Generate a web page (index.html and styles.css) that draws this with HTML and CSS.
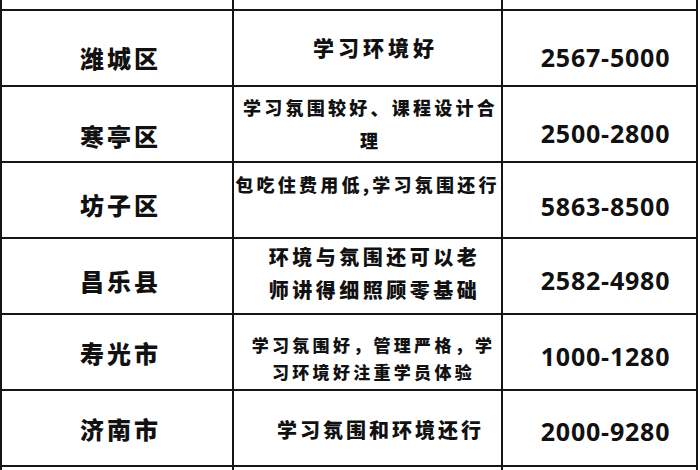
FILE: index.html
```html
<!DOCTYPE html>
<html lang="zh-CN">
<head>
<meta charset="utf-8">
<title>潍坊地区培训费用对比</title>
<link rel="stylesheet" href="styles.css">
</head>
<body>
<div class="sheet">
  <div class="row row0">
    <div class="cell"></div><div class="cell"></div><div class="cell"></div>
  </div>
  <div class="row row1">
    <div class="cell name">潍城区</div>
    <div class="cell desc">学习环境好</div>
    <div class="cell price">2567-5000</div>
  </div>
  <div class="row row2">
    <div class="cell name">寒亭区</div>
    <div class="cell desc">学习氛围较好、课程设计合<br>理</div>
    <div class="cell price">2500-2800</div>
  </div>
  <div class="row row3">
    <div class="cell name">坊子区</div>
    <div class="cell desc">包吃住费用低,学习氛围还行</div>
    <div class="cell price">5863-8500</div>
  </div>
  <div class="row row4">
    <div class="cell name">昌乐县</div>
    <div class="cell desc">环境与氛围还可以老<br>师讲得细照顾零基础</div>
    <div class="cell price">2582-4980</div>
  </div>
  <div class="row row5">
    <div class="cell name">寿光市</div>
    <div class="cell desc">学习氛围好，管理严格，学<br>习环境好注重学员体验</div>
    <div class="cell price">1000-1280</div>
  </div>
  <div class="row row6">
    <div class="cell name">济南市</div>
    <div class="cell desc">学习氛围和环境还行</div>
    <div class="cell price">2000-9280</div>
  </div>
  <div class="row row7">
    <div class="cell"></div><div class="cell"></div><div class="cell"></div>
  </div>
</div>
</body>
</html>
```

FILE: styles.css
```css
html, body {
  margin: 0;
  padding: 0;
  background: #ffffff;
}

body {
  width: 700px;
  height: 470px;
  overflow: hidden;
  color: #111111;
  font-family: "Noto Sans CJK SC", "Noto Sans", sans-serif;
}

.sheet {
  display: grid;
  grid-template-columns: 230px 267px 193px;
  grid-template-rows: 9px repeat(6, 74px) 10px;
  gap: 2px;
  padding: 0 2px;
  width: max-content;
  background: #151515;
}

.row {
  display: contents;
}

.cell {
  background: #ffffff;
  display: flex;
  align-items: center;
  justify-content: center;
  text-align: center;
  box-sizing: border-box;
  white-space: nowrap;
}

.name {
  font-size: 24px;
  font-weight: 900;
  letter-spacing: 3px;
  padding-left: 7px;
  line-height: 1.3;
}

.desc {
  font-weight: 900;
  line-height: 1.3;
}

.price {
  font-family: "Open Sans", "Noto Sans", sans-serif;
  font-size: 25px;
  font-weight: 700;
  letter-spacing: 0.8px;
  padding-left: 12px;
  line-height: 1.3;
}

/* row 1 */
.row1 .name { padding-top: 19px; }
.row1 .price { padding-top: 18px; }
.row1 .desc { font-size: 21px; letter-spacing: 4px; padding-left: 16px; }

/* row 2 */
.row2 .name { padding-top: 24px; }
.row2 .price { padding-top: 18px; }
.row2 .desc { font-size: 18px; letter-spacing: 3.25px; padding-left: 6px; line-height: 33px; }

/* row 3 */
.row3 .name { padding-top: 10px; }
.row3 .price { padding-top: 12px; }
.row3 .desc { font-size: 18px; letter-spacing: 3.25px; padding-bottom: 30px; }

/* row 4 */
.row4 .name { padding-top: 10px; }
.row4 .price { padding-top: 8px; }
.row4 .desc { font-size: 20px; letter-spacing: 3.5px; padding-left: 14px; padding-bottom: 6px; line-height: 33px; }

/* row 5 */
.row5 .name { padding-top: 2px; }
.row5 .price { padding-top: 8px; }
.row5 .desc { font-size: 17px; letter-spacing: 3.3px; padding-left: 12px; padding-top: 12px; line-height: 27px; }

/* row 6 */
.row6 .name { padding-top: 2px; }
.row6 .price { padding-top: 6px; }
.row6 .desc { font-size: 20px; letter-spacing: 3px; padding-left: 26px; padding-top: 4px; }
```
